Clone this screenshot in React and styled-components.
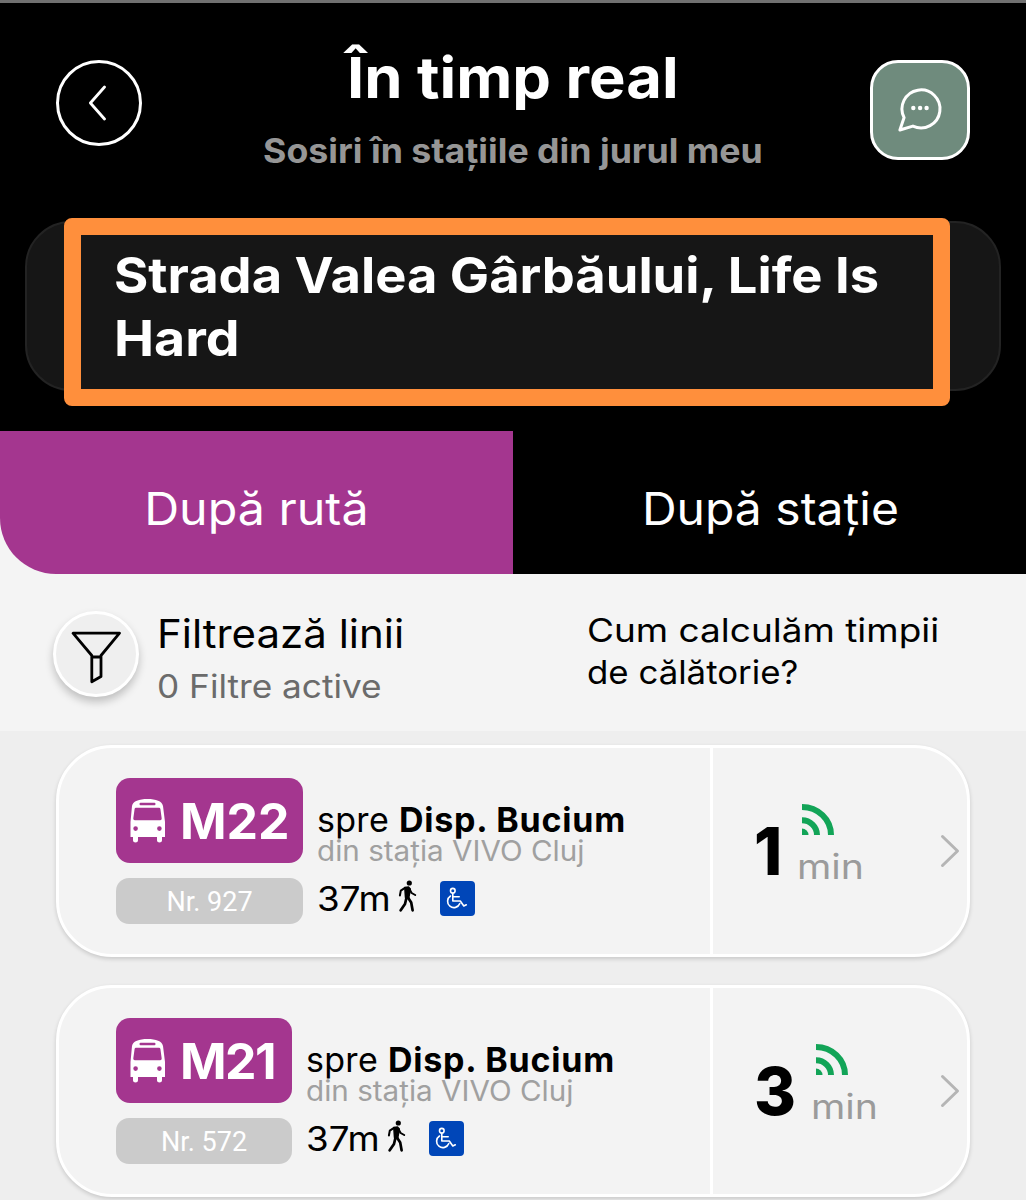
import React from "react";
import styled, { createGlobalStyle } from "styled-components";

const GlobalStyle = createGlobalStyle`
  *, *::before, *::after { box-sizing: border-box; }
  html, body { margin: 0; padding: 0; background: #eeeeee; }
  body { font-family: Inter, "Open Sans", "Liberation Sans", sans-serif; overflow: hidden; }
  button { font: inherit; color: inherit; padding: 0; background: none; border: 0; }
  h1 { margin: 0; }
  svg { display: block; flex: none; }
`;

const Screen = styled.div`
  width: 1026px;
  height: 1200px;
  overflow: hidden;
  display: flex;
  flex-direction: column;
  background: #eeeeee;
`;

const Text = styled.div`
  font-size: ${(p) => p.$size}px;
  line-height: ${(p) => p.$line}px;
  font-weight: ${(p) => p.$weight || 400};
  letter-spacing: ${(p) => p.$track || 0}px;
  color: ${(p) => p.$color || "#000"};
  white-space: nowrap;
  width: max-content;
  transform: scaleX(${(p) => p.$wide || 1});
  transform-origin: ${(p) => (p.$centered ? "center" : "left")};
`;

const Header = styled.header`
  height: 431px;
  flex: none;
  border-top: 3px solid #707070;
  background: #000;
`;

const TitleBar = styled.div`
  height: 218px;
  padding: 57px 56px 0;
  display: flex;
  justify-content: space-between;
  align-items: flex-start;
`;

const BackButton = styled.button`
  width: 86px;
  height: 86px;
  border: 3px solid #fff;
  border-radius: 50%;
  display: grid;
  place-items: center;
`;

const Titles = styled.div`
  margin-top: -22px;
  padding-left: 14px;
  display: flex;
  flex-direction: column;
  align-items: center;
`;

const ChatButton = styled.button`
  width: 100px;
  height: 100px;
  border: 3px solid #fff;
  border-radius: 28px;
  background: #6f8b7d;
  display: grid;
  place-items: center;
`;

const AddressBox = styled.div`
  position: relative;
  height: 170px;
  margin: 0 25px;
  padding: 21px 87px 0;
  border: 2px solid #232323;
  border-radius: 46px;
  background: #161616;
`;

const Highlight = styled.div`
  position: absolute;
  left: 37px;
  top: -5px;
  width: 886px;
  height: 188px;
  border: 17px solid #ff8f3c;
  border-radius: 8px;
`;

const Tabs = styled.nav`
  height: 143px;
  flex: none;
  display: grid;
  grid-template-columns: 1fr 1fr;
  background: #f4f4f4;
`;

const Tab = styled.button`
  display: flex;
  justify-content: center;
  padding-top: 48px;
  padding-left: ${(p) => (p.$active ? 0 : 2)}px;
  background: ${(p) => (p.$active ? "#a4368f" : "#000")};
  border-bottom-left-radius: ${(p) => (p.$active ? 56 : 0)}px;
`;

const FilterBar = styled.section`
  height: 157px;
  flex: none;
  display: flex;
  padding-left: 53px;
  background: #f4f4f4;
`;

const FilterButton = styled.button`
  width: 86px;
  height: 86px;
  margin-top: 37px;
  border: 3px solid #fff;
  border-radius: 50%;
  background: #efefef;
  box-shadow: 0 5px 9px rgba(0, 0, 0, 0.22);
  display: grid;
  place-items: center;
`;

const FilterLabels = styled.div`
  width: 448px;
  padding: 33px 0 0 18px;
`;

const HelpLink = styled.div`
  padding-top: 35px;
`;

const List = styled.main`
  padding: 14px 56px 0;
  display: flex;
  flex-direction: column;
  gap: 28px;
`;

const Card = styled.article`
  height: 212px;
  flex: none;
  display: flex;
  border: 3px solid #fff;
  border-radius: 56px;
  background: #f3f3f3;
  box-shadow: 0 2px 4px rgba(0, 0, 0, 0.16);
`;

const Route = styled.div`
  width: 654px;
  padding: 30px 0 0 57px;
  display: flex;
  border-right: 3px solid #fff;
`;

const Badges = styled.div`
  width: ${(p) => p.$width}px;
  flex: none;
  display: flex;
  flex-direction: column;
  gap: 15px;
`;

const LineBadge = styled.div`
  height: 85px;
  padding-left: 14px;
  border-radius: 14px;
  background: #a4368f;
  display: flex;
  align-items: center;
  gap: 15px;
`;

const VehicleBadge = styled.div`
  height: 46px;
  border-radius: 13px;
  background: #cbcbcb;
  color: #fff;
  font: 400 27px/48px Roboto, "Liberation Sans", sans-serif;
  text-align: center;
`;

const Details = styled.div`
  padding: 24px 0 0 14px;
`;

const Destination = styled.b`
  letter-spacing: 0.8px;
`;

const Stop = styled(Text)`
  margin-top: 1px;
`;

const WalkRow = styled.div`
  display: flex;
  align-items: center;
  height: 42px;
  margin-top: 15px;
`;

const WalkIcon = styled.svg`
  margin: -6px 0 0 13px;
`;

const AccessIcon = styled.svg`
  margin: -2px 0 0 22px;
`;

const Arrival = styled.div`
  flex: 1;
  display: flex;
  padding-left: 41px;
`;

const Minutes = styled.div`
  width: ${(p) => p.$width}px;
  padding-top: 63px;
`;

const Unit = styled.div`
  flex: 1;
  padding-top: 56px;
`;

const SignalIcon = styled.svg`
  margin: 0 0 9px 5px;
`;

const Chevron = styled.svg`
  margin: 86px 7px 0 0;
`;

function Bus() {
  return (
    <svg width="35" height="44" viewBox="0 0 35 44">
      <path
        fill="#fff"
        fillRule="evenodd"
        d="M2 7C3 2 9 0 17.5 0S32 2 33 7L35 23V38H32V41.5Q32 43.5 29.5 43.5T27 41.5V38H8V41.5Q8 43.5 5.500 43.500T3 41.500V38H.5V23ZM10.500 3.800Q9.500 3.800 9.500 5T10.500 6.200H24.500Q25.500 6.200 25.500 5T24.500 3.800ZM6 8.700Q4.800 8.700 4.600 10L3.300 19.500Q3.200 21.300 4.800 21.300H30.200Q31.800 21.300 31.700 19.500L30.400 10Q30.200 8.700 29 8.700ZM5.600 27.300a2.300 2.300 0 1 0 0 4.600a2.300 2.300 0 1 0 0-4.600ZM29.400 27.300a2.300 2.300 0 1 0 0 4.600a2.300 2.300 0 1 0 0-4.600Z"
      />
    </svg>
  );
}

function Walker() {
  return (
    <WalkIcon width="20" height="32" viewBox="0 0 20 32" fill="none" stroke="#000" strokeLinecap="round" strokeLinejoin="round">
      <circle cx="11.300" cy="3" r="2.600" fill="#000" stroke="none" />
      <path d="M6.800 7.500L10.500 7L12.300 9L10.800 17.500L7.500 17.500Z" fill="#000" strokeWidth="1.500" />
      <path d="M7 7.800L2.800 10.600L1.900 15.500" strokeWidth="2" />
      <path d="M11.700 9.500L13.600 13L17.200 15" strokeWidth="2" />
      <path d="M8.500 17.500L7 24L2.700 30.300M9.800 17.300L13.200 22.600L14.600 30.300" strokeWidth="2.700" />
    </WalkIcon>
  );
}

function Wheelchair() {
  return (
    <AccessIcon width="35" height="35" viewBox="0 0 35 35" fill="none">
      <rect width="35" height="35" rx="4" fill="#0046b8" />
      <g stroke="#fff" strokeWidth="1.600" strokeLinecap="round" strokeLinejoin="round">
        <circle cx="12.800" cy="9.700" r="2.300" />
        <path d="M12.800 12.400V20H20.300L23.800 25L26.300 23.800M13 15.800H19.200" />
        <path d="M10.500 15A6.300 6.300 0 1 0 19.800 22.500" />
      </g>
    </AccessIcon>
  );
}

function Signal() {
  return (
    <SignalIcon width="32" height="31" viewBox="0 0 32 31" fill="none" stroke="#12a457" strokeWidth="6">
      <path d="M0 3A29 28 0 0 1 29 31M0 16.300A15 14.700 0 0 1 15 31" />
      <path d="M0 24.500A6.500 6.500 0 0 1 6.500 31H0Z" fill="#12a457" stroke="none" />
    </SignalIcon>
  );
}

function Departure({ line, lineTrack, number, width, minutes, minutesWidth }) {
  return (
    <Card>
      <Route>
        <Badges $width={width}>
          <LineBadge>
            <Bus />
            <Text $size={50} $line={60} $weight={700} $track={lineTrack} $color="#fff">{line}</Text>
          </LineBadge>
          <VehicleBadge>Nr. {number}</VehicleBadge>
        </Badges>
        <Details>
          <Text $size={34} $line={36} $track={0.3}>
            spre <Destination>Disp. Bucium</Destination>
          </Text>
          <Stop $size={28} $line={24} $color="#a0a0a0" $wide={1.058}>din stația VIVO Cluj</Stop>
          <WalkRow>
            <Text $size={34} $line={42} $wide={1.08}>37m</Text>
            <Walker />
            <Wheelchair />
          </WalkRow>
        </Details>
      </Route>
      <Arrival>
        <Minutes $width={minutesWidth}>
          <Text $size={66} $line={80} $weight={800} $wide={0.97}>{minutes}</Text>
        </Minutes>
        <Unit>
          <Signal />
          <Text $size={35} $line={44} $color="#9b9b9b" $wide={1.12}>min</Text>
        </Unit>
        <Chevron width="20" height="34" viewBox="0 0 20 34" fill="none" stroke="#b5b5b5" strokeWidth="3" strokeLinecap="round" strokeLinejoin="round">
          <path d="M2.500 2.500L17.500 17L2.500 31.500" />
        </Chevron>
      </Arrival>
    </Card>
  );
}

export default function App() {
  return (
    <>
      <GlobalStyle />
      <Screen>
        <Header>
          <TitleBar>
            <BackButton>
              <svg width="20" height="36" viewBox="0.500 0 20 36" fill="none" stroke="#fff" strokeWidth="2.800" strokeLinecap="round" strokeLinejoin="round">
                <path d="M16 2L1.900 18L16 34" />
              </svg>
            </BackButton>
            <Titles>
              <Text as="h1" $centered $size={57} $line={80} $weight={700} $wide={1.078} $color="#fff">În timp real</Text>
              <Text $centered $size={34} $line={66} $weight={700} $wide={1.05} $color="#969696">Sosiri în stațiile din jurul meu</Text>
            </Titles>
            <ChatButton>
              <svg width="48" height="48" viewBox="26.400 26 48 48" fill="none" stroke="#fff" strokeWidth="3" strokeLinejoin="round">
                <path d="M43.300 66.100L30.300 70L34.500 57.600A19 19 0 1 1 43.300 66.100Z" />
                <g fill="#fff" stroke="none">
                  <circle cx="43.700" cy="48" r="2.200" />
                  <circle cx="50.500" cy="48" r="2.200" />
                  <circle cx="57" cy="48" r="2.200" />
                </g>
              </svg>
            </ChatButton>
          </TitleBar>
          <AddressBox>
            <Text $size={49} $line={63} $weight={700} $wide={1.07} $color="#fff">Strada Valea Gârbăului, Life Is</Text>
            <Text $size={49} $line={63} $weight={700} $wide={1.095} $color="#fff">Hard</Text>
            <Highlight />
          </AddressBox>
        </Header>
        <Tabs>
          <Tab $active>
            <Text $centered $size={45} $line={60} $wide={1.075} $color="#fff">După rută</Text>
          </Tab>
          <Tab>
            <Text $centered $size={45} $line={60} $wide={1.067} $color="#fff">După stație</Text>
          </Tab>
        </Tabs>
        <FilterBar>
          <FilterButton>
            <svg width="50" height="54" viewBox="71.500 627.500 50 54" overflow="visible" fill="none" stroke="#000" strokeWidth="2.800" strokeLinejoin="round">
              <path d="M73.500 633.700H120L101.500 656V677L92.300 682.300V656ZM92.300 657.500H101.500" />
            </svg>
          </FilterButton>
          <FilterLabels>
            <Text $size={39} $line={53} $wide={1.077}>Filtrează linii</Text>
            <Text $size={32} $line={54} $wide={1.1} $color="#6b6b6b">0 Filtre active</Text>
          </FilterLabels>
          <HelpLink>
            <Text $size={33} $line={42} $wide={1.12}>Cum calculăm timpii</Text>
            <Text $size={33} $line={42} $wide={1.055}>de călătorie?</Text>
          </HelpLink>
        </FilterBar>
        <List>
          <Departure line="M22" lineTrack={0} number="927" width={187} minutes="1" minutesWidth={43} />
          <Departure line="M21" lineTrack={-1.5} number="572" width={176} minutes="3" minutesWidth={57} />
        </List>
      </Screen>
    </>
  );
}
